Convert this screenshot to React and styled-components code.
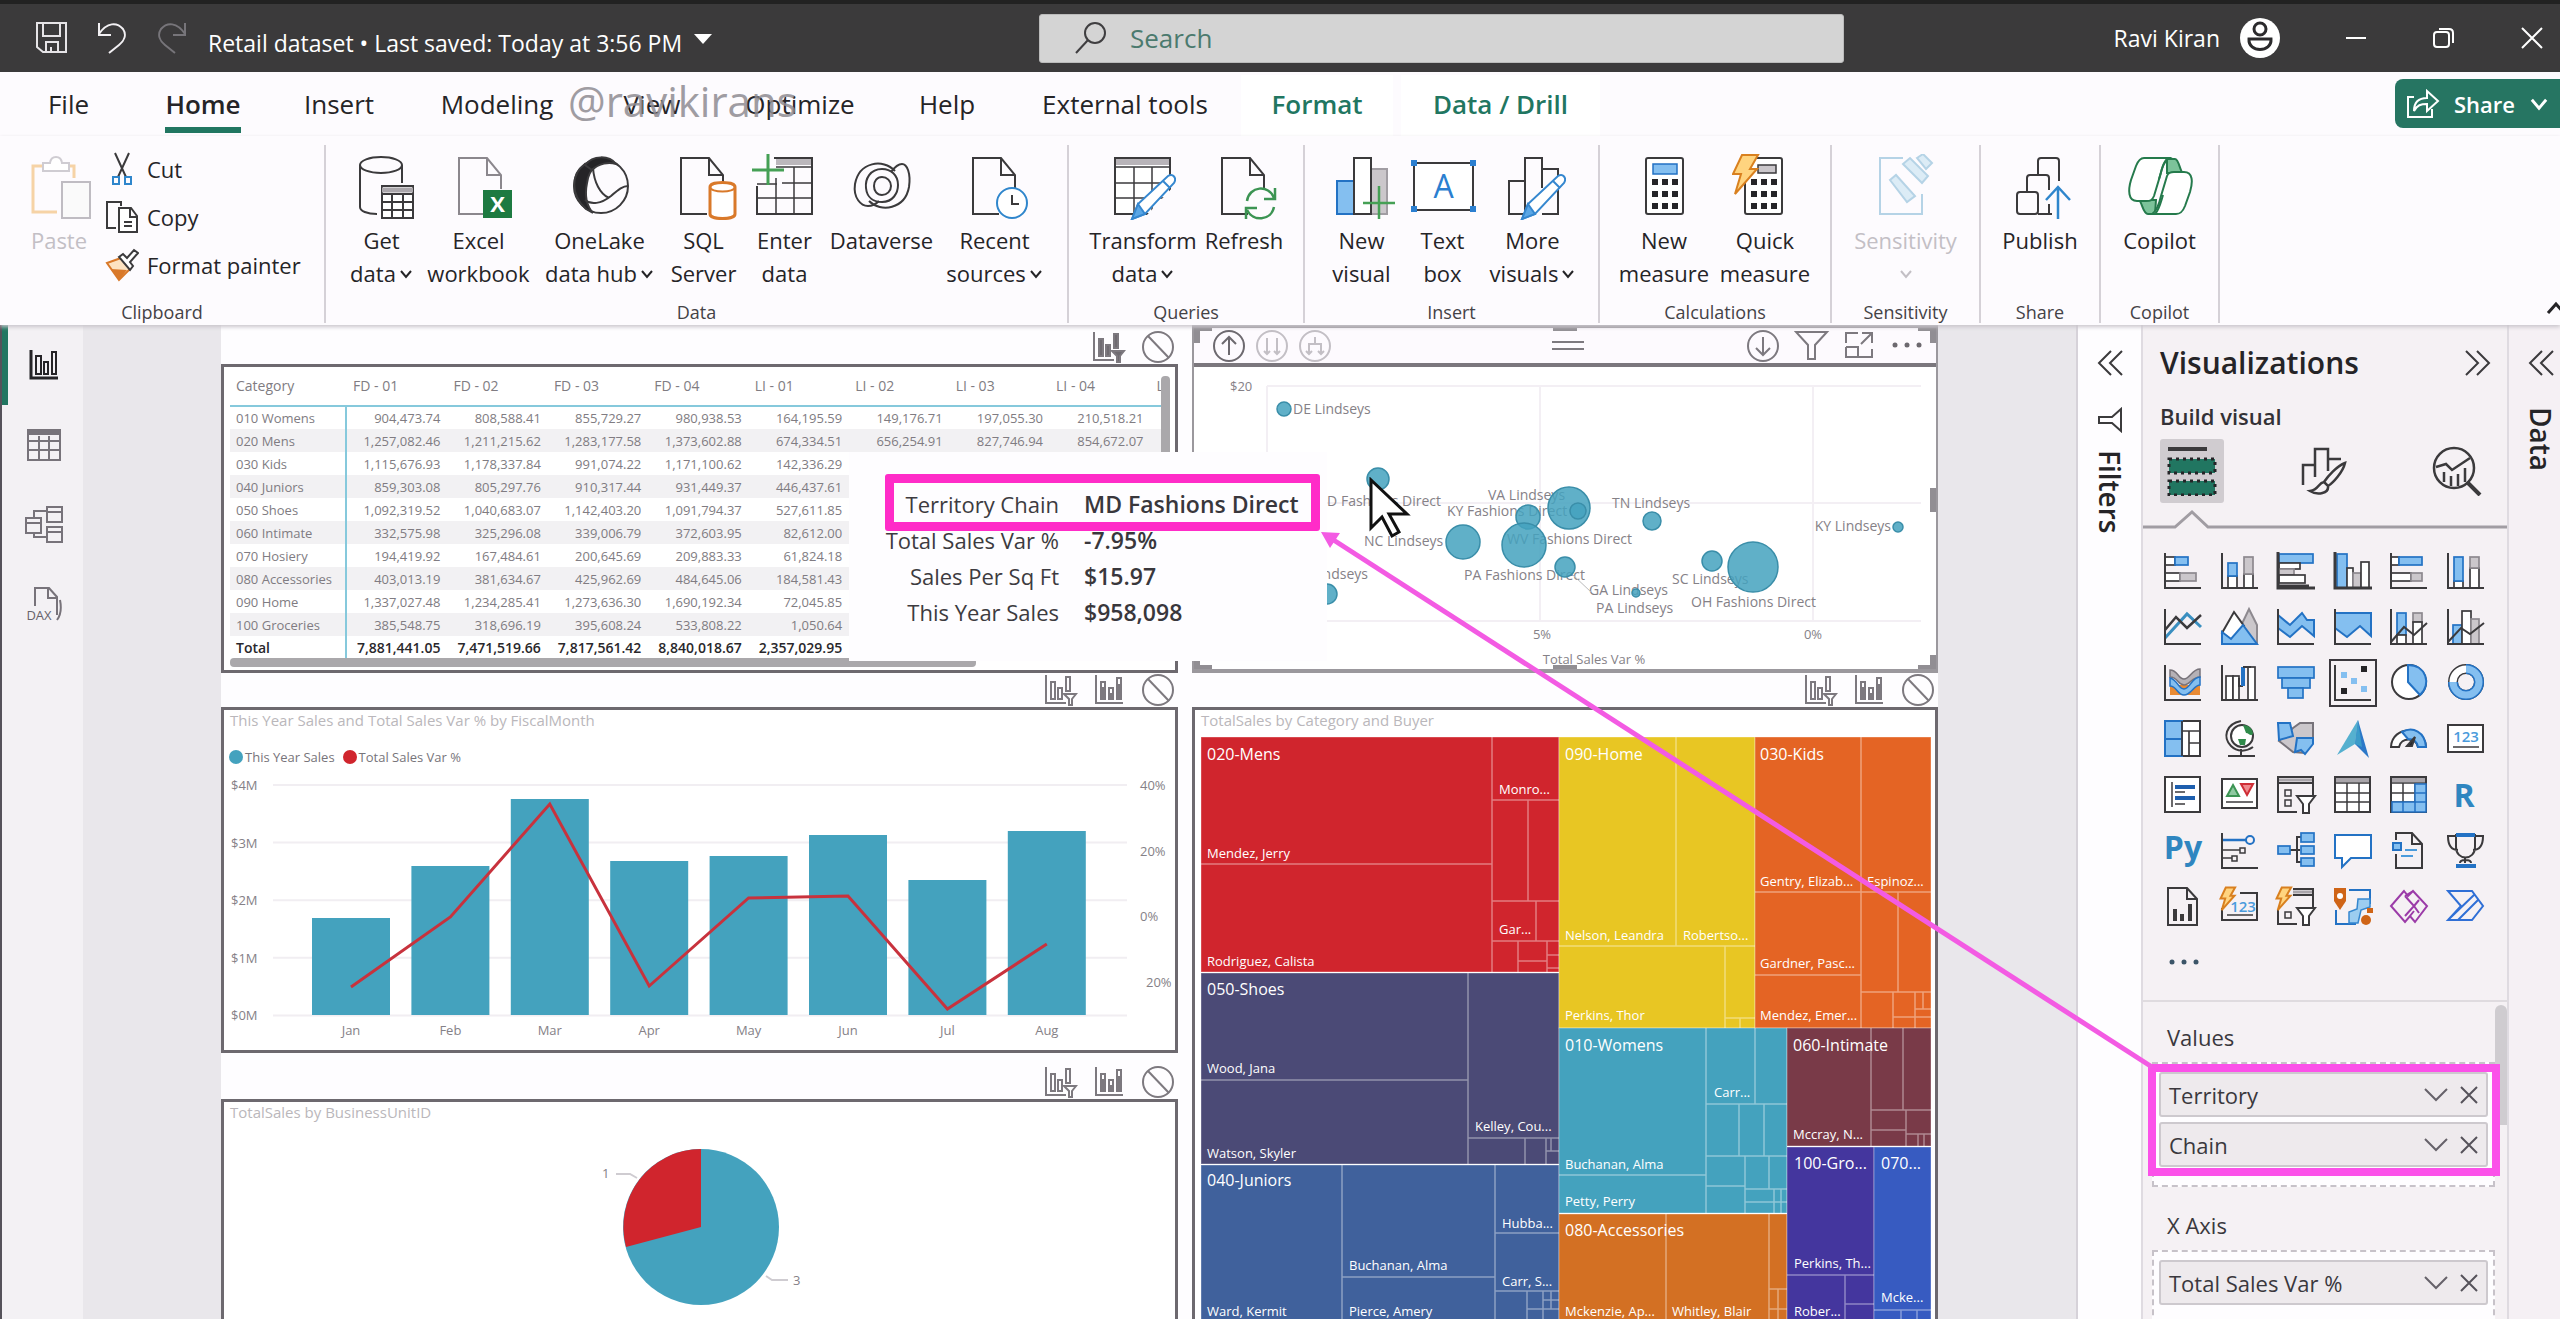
import React from 'react';
import styled, { createGlobalStyle, css } from 'styled-components';

const C = {
  ink: '#3b3a3c',
  dark: '#252427',
  green: '#217661',
  blue: '#84bff0',
  blueLine: '#2372c4',
  gray: '#cbc7cb',
  teal: '#44a2be',
  red: '#d0252d',
  pink: '#fb51e9',
};

const Global = createGlobalStyle`
  * { box-sizing: border-box; }
  html, body { margin: 0; padding: 0; }
  body { font-family: "Open Sans", "Noto Sans", sans-serif; color: ${C.dark}; overflow: hidden; }
  button { font: inherit; color: inherit; background: none; border: 0; padding: 0; margin: 0; }
  svg { display: block; flex: none; }
  h2, h3, h4, p, dl, dd, dt { margin: 0; font-weight: inherit; font-size: inherit; }
`;

const Shell = styled.div`
  position: relative; display: flex; flex-direction: column; height: 100vh; overflow: hidden; background: #fdfbfe;
`;

/* ---------- title bar ---------- */
const TitleBar = styled.header`
  display: grid; grid-template-columns: 1039fr 805fr 716fr; align-items: center; flex: none;
  height: 72px; background: #3b3a3b; color: #fff; border-top: 4px solid #222; font-size: 23px;
`;
const TitleLeft = styled.div`display: flex; align-items: center; padding-left: 32px; gap: 20px;`;
const IconButton = styled.button`display: flex; align-items: center; justify-content: center; flex: none; width: 40px; height: 40px;`;
const FileName = styled.button`display: flex; align-items: center; gap: 12px; padding-top: 10px; margin-left: -4px; white-space: nowrap; svg { margin-bottom: 8px; }`;
const SearchBox = styled.label`
  display: flex; align-items: center; gap: 20px; height: 49px; padding-left: 34px; background: #d4d4d4; border: 1px solid #bbb; border-radius: 3px;
`;
const SearchInput = styled.input`
  flex: 1; border: 0; outline: 0; background: transparent; font: 26px "Open Sans", "Noto Sans", sans-serif; color: #3f6e63;
  &::placeholder { color: #4b7a6e; opacity: 1; }
`;
const TitleRight = styled.div`display: flex; align-items: center; justify-content: flex-end; padding-right: 8px;`;
const User = styled.button`display: flex; align-items: center; gap: 19px; margin-right: 55px;`;
const WindowButtons = styled.div`display: flex; gap: 48px;`;

/* ---------- ribbon ---------- */
const Tabs = styled.nav`position: relative; display: flex; align-items: stretch; height: 64px; padding-top: 3px; flex: none;`;
const Tab = styled.button`
  width: ${p => p.$w}px; font-size: 26px; padding-bottom: 4px; white-space: nowrap;
  ${p => p.$active && css`font-weight: 600;`}
  ${p => p.$context && css`color: ${C.green}; font-weight: 600; background: #fff; margin-left: ${p.$gap}px;`}
  span { display: inline-block; padding: 8px 0 2px; border-bottom: 6px solid ${p => (p.$active ? C.green : 'transparent')}; line-height: 42px; }
`;
const Watermark = styled.div`position: absolute; left: 568px; top: 2px; font-size: 42px; line-height: 54px; color: #8f8c92; opacity: .85; pointer-events: none;`;
const ShareButton = styled.button`
  display: flex; align-items: center; justify-content: center; gap: 14px; width: 165px; height: 49px; margin: 4px 0 0 auto; border-radius: 8px 0 0 8px;
  background: #267562; color: #fff; font-size: 22px; font-weight: 600;
`;
const Ribbon = styled.section`display: flex; flex: none; height: 189px; padding: 9px 0 2px; position: relative; box-shadow: 0 2px 4px #c9c5cb; z-index: 1; background: #fdfbfe;`;
const Group = styled.div`width: ${p => p.$w}px; display: flex; flex-direction: column; justify-content: space-between; border-right: 2px solid #d5d1d7;`;
const GroupBody = styled.div`display: flex; justify-content: center;`;
const GroupLabel = styled.div`font-size: 18px; line-height: 22px; text-align: center; color: #444246;`;
const Command = styled.button`
  display: flex; flex-direction: column; align-items: center; width: ${p => p.$w}px; padding-top: 9px; font-size: 22px; line-height: 33px; white-space: nowrap;
  color: ${p => (p.disabled ? '#c3bfc5' : C.dark)};
  svg.icon { margin-bottom: 4px; }
  span { display: flex; align-items: center; gap: 3px; min-height: 33px; }
`;
const ClipRow = styled.div`display: flex; padding: 0 14px 0 24px; gap: 11px;`;
const ClipList = styled.div`display: flex; flex-direction: column;`;
const ClipButton = styled.button`display: flex; align-items: center; gap: 8px; height: 48px; font-size: 22px; white-space: nowrap;`;
const Collapse = styled.button`margin: auto 0 8px auto; width: 14px; overflow: hidden;`;

/* ---------- workspace ---------- */
const Workspace = styled.main`display: flex; flex: 1; min-height: 0;`;
const Rail = styled.nav`width: 83px; flex: none; background: #f3f1f4; border-left: 2px solid #55525a; display: flex; flex-direction: column;`;
const RailButton = styled.button`
  height: 80px; display: flex; align-items: center; justify-content: center; padding-right: 4px; border-left: 6px solid ${p => (p.$active ? C.green : 'transparent')};
`;
const Canvas = styled.div`flex: 1; min-width: 0; background: #e9e7eb; padding: 0 138px; overflow: hidden; border-right: 2px solid #d6d2d9;`;
const Page = styled.div`position: relative; display: grid; grid-template-columns: 957fr 746fr; gap: 14px; height: 100%; background: #fefdff; overflow: hidden;`;
const Column = styled.div`display: flex; flex-direction: column; min-width: 0;`;
const VisualActions = styled.div`display: flex; justify-content: flex-end; align-items: flex-end; gap: 16px; flex: none; height: ${p => p.$h}px; padding: 0 3px 1px;`;
const Card = styled.section`position: relative; flex: none; border: 3px solid #6d696f; background: #fff; height: ${p => p.$h}px; overflow: hidden;`;
const CardTitle = styled.h3`font-size: 15px; line-height: 20px; color: #bab7bb; padding: 0 6px; white-space: nowrap;`;
const Plot = styled.svg`width: 100%; height: auto;`;
const TreeFrame = styled.div`padding-top: 4px;`;

const TableFrame = styled.div`height: 288px; margin: 3px 14px 0 6px; overflow: hidden;`;
const Matrix = styled.table`
  border-collapse: collapse; table-layout: fixed; width: 1020px; font-size: 13px; color: #807c82;
  th, td { padding: 0 6px; height: 23px; line-height: 22px; text-align: right; font-weight: 400; white-space: nowrap; }
  th:first-child { width: 116px; text-align: left; border-right: 2px solid #86c9dc; }
  thead th { height: 36px; text-align: left; padding: 0 7px 4px; border-bottom: 2px solid #86c9dc; font-size: 14px; }
  thead th:first-child { border-right: 0; padding: 0 6px 4px; }
  tbody tr:nth-child(even) { background: #f2f1f3; }
  tfoot th, tfoot td { font-weight: 600; font-size: 14px; color: #29272b; padding-left: 0; }
  tfoot th { padding-left: 6px; }
`;
const VScroll = styled.div`position: absolute; right: 5px; top: 9px; width: 9px; height: 270px; border-radius: 4px; background: #aaa8ab;`;
const HScroll = styled.div`width: 746px; height: 9px; margin-left: 6px; border-radius: 4px; background: #aaa8ab;`;

const Legend = styled.ul`
  display: flex; gap: 8px; list-style: none; margin: 17px 0 0; padding: 0 5px; font-size: 13px; line-height: 20px; color: #77747a; height: 29px;
  li { display: flex; gap: 2px; align-items: center; height: 20px; white-space: nowrap; }
`;
const Dot = styled.i`width: 14px; height: 14px; border-radius: 50%; background: ${p => p.$c};`;

const SelectedVisual = styled.section`position: relative; flex: none; height: 348px; border: 2px solid #9b989d; border-bottom-width: 4px; border-top-width: 3px; background: #fff; overflow: hidden;`;
const VisualHeader = styled.div`display: flex; align-items: center; height: 39px; padding: 0 12px 0 18px; background: #fdfafe; border-bottom: 4px solid #7b777d;`;
const HeaderSide = styled.div`display: flex; align-items: center; flex: 1; gap: ${p => p.$gap}px; justify-content: ${p => (p.$end ? 'flex-end' : 'flex-start')};`;
const Handle = styled.i`position: absolute; background: #918e93; ${p => p.$s}`;

const Tooltip = styled.div`
  position: absolute; left: 628px; top: 127px; width: 478px; height: 209px; background: #fefdff;
`;
const TipList = styled.dl`
  display: grid; grid-template-columns: 210px auto; column-gap: 25px; padding-top: 34px; font-size: 22px; line-height: 36px; white-space: nowrap;
  dt { justify-self: end; color: #3d3b40; }
  dd { color: #39373c; font-weight: 600; font-size: 23px; }
`;
const TipMark = styled.div`position: absolute; left: 36px; top: 22px; width: 435px; height: 57px; border: 9px solid #ff2cc8; border-radius: 3px;`;
const Pointer = styled.svg`position: absolute; left: 1147px; top: 152px;`;

/* ---------- side panes ---------- */
const FiltersPane = styled.aside`width: 65px; flex: none; background: #fefdff; border-right: 2px solid #dfdbe1; display: flex; flex-direction: column; align-items: center; padding: 18px 0 0; gap: 24px;`;
const DataPane = styled.aside`width: 53px; flex: none; background: #f5f0f4; border-left: 2px solid #dfdbe1; display: flex; flex-direction: column; align-items: center; padding: 18px 0 0 12px; gap: 24px;`;
const VerticalLabel = styled.h2`display: flex; align-items: center; gap: 17px; writing-mode: vertical-rl; font-size: 28px; line-height: 34px; font-weight: 600;`;
const VizPane = styled.aside`width: 364px; flex: none; background: #f5f1f4; position: relative;`;
const PaneHead = styled.div`display: flex; justify-content: space-between; align-items: center; height: 40px; margin: 18px 16px 0 17px;`;
const PaneTitle = styled.h2`font-size: 30px; line-height: 40px; font-weight: 600;`;
const SubTitle = styled.h3`margin: 17px 17px 0; font-size: 22px; line-height: 32px; font-weight: 600; color: #333136;`;
const Modes = styled.div`display: flex; justify-content: space-between; margin: 7px 18px 0 17px;`;
const Mode = styled.button`width: 64px; height: 64px; display: flex; align-items: center; justify-content: center; border-radius: 3px; background: ${p => (p.$active ? '#d0ccd0' : 'none')};`;
const Gallery = styled.div`display: grid; grid-template-columns: repeat(6, 1fr); grid-auto-rows: 56px; margin: 14px 13px 0 12px;`;
const VizButton = styled.button`
  display: flex; align-items: center; justify-content: center; width: 48px; height: 48px; place-self: center;
  border: ${p => (p.$selected ? '2px solid #3b383d' : '0')};
`;
const More = styled.button`display: block; margin: 9px 0 0 25px;`;
const Wells = styled.div`position: relative; margin-top: 20px; border-top: 2px solid #dfdbdf; padding: 18px 12px 0 9px;`;
const WellName = styled.h4`font-size: 22px; line-height: 34px; padding-left: 15px; color: #3a383d;`;
const Well = styled.div`position: relative; display: flex; flex-direction: column; gap: 5px; margin: 8px 0 21px; padding: 8px 5px 18px; border: 2px dashed #c7c2c9; background: #fefdff;`;
const Field = styled.div`display: flex; align-items: center; gap: 12px; height: 45px; padding: 0 8px; border: 2px solid #cdc9ce; border-radius: 3px; background: #eeeaed; font-size: 22px; color: #3a383d; span { flex: 1; }`;
const WellScroll = styled.div`position: absolute; right: 0; top: 3px; width: 12px; height: 120px; border-radius: 6px 6px 0 0; background: #cfccd0;`;
const WellMark = styled.div`position: absolute; left: -6px; top: 0; width: 352px; height: 112px; border: 8px solid ${C.pink};`;
const Arrow = styled.svg`position: absolute; left: 0; top: 0; pointer-events: none; z-index: 3;`;

/* ---------- small drawings ---------- */
const Svg = ({ w, h = w, vb, children, ...r }) => (
  <svg width={w} height={h} viewBox={vb || `0 0 ${w} ${h}`} fill="none" stroke={C.ink} strokeWidth="2" aria-hidden="true" {...r}>{children}</svg>
);
const Chevron = ({ w = 14, color = C.dark }) => <Svg w={w} h={w} vb="0 0 14 14" stroke={color}><path d="M2 4l5 6 5-6" /></Svg>;
const ChevronButton = styled.button`display: flex; align-items: center; height: 40px;`;
const DoubleChevron = ({ right }) => (
  <Svg w={26} h={26}>{right
    ? <path d="M1 1l12 12L1 25M12 1l12 12-12 12" />
    : <path d="M25 1L13 13l12 12M14 1L2 13l12 12" />}</Svg>
);
const Big = ({ children, ...r }) => <Svg w={66} h={66} className="icon" {...r}>{children}</Svg>;
const PageShape = ({ x = 11, c = C.ink }) => <><path d={`M${x + 26} 60H${x}V4h28l14 17v14`} fill="none" stroke={c} /><path d={`M${x + 28} 4v17h14`} stroke={c} /></>;
const Pencil = () => <><path d="M22 65l6-15 30-28c5-3 9 2 6 7L35 60z" fill="#fff" stroke="#3587cf" /><path d="M22 65l6-15 7 10z" fill="#5ba7e6" stroke="#3587cf" /><path d="M53 27l7 7" stroke="#3587cf" /></>;
const Keys = ({ x }) => [0, 1, 2].flatMap(r => [0, 1, 2].map(c => <rect key={`${r}${c}`} x={x + c * 10} y={25 + r * 12} width="6" height="6" fill={C.dark} stroke="none" />));
const Bolt = ({ s = 1, x = 0, y = 0 }) => <path transform={`translate(${x} ${y}) scale(${s})`} d="M10 1h16l-8 14h7L3 40l6-20H1z" fill="#ffd47f" stroke="#d9801f" strokeWidth={2 / s} />;

const BIG = {
  paste: <Big><path d="M40 12h8v12M18 12H7v46h24" stroke="#f6d3a6" strokeWidth="3" /><path d="M17 17v-8h7c1-8 11-8 12 0h7v8z" stroke="#cfccd2" fill="#fff" /><rect x="36" y="28" width="28" height="36" fill="#fafafa" stroke="#bfbcc2" /></Big>,
  get: <Big><ellipse cx="32" cy="11" rx="21" ry="8" /><path d="M11 11v42c0 4 7 7 17 7M53 11v18" /><rect x="33" y="32" width="31" height="32" fill="#fff" /><path d="M33 36h31" strokeWidth="5" stroke="#aaa6ab" /><path d="M33 40h31M33 48h31M33 56h31M43 40v24M54 40v24" /></Big>,
  excel: <Big><PageShape x={13} c="#8b878d" /><rect x="37" y="36" width="29" height="28" fill="#1d7a41" stroke="none" /><text x="51.500" y="58" textAnchor="middle" fontSize="22" fontWeight="700" fill="#fff" stroke="none">X</text></Big>,
  lake: <Big><circle cx="34" cy="32" r="27" /><path d="M18 10C4 20 3 40 19 55l7 4c-8-9-8-20-6-30 1-7 3-12 7-15z" fill={C.dark} /><path d="M18 11C26 1 42 1 49 10c-7-2-17-1-24 6z" fill={C.dark} /><path d="M26 14c1 14 7 26 16 30M18 46c6 5 16 4 26-4 8-7 12-10 17-10" /></Big>,
  sql: <Big><PageShape x={10} /><path d="M39 33c0-6 25-6 25 0v27c0 6-25 6-25 0z" fill="#fff" stroke="#d9792a" strokeWidth="3" /><path d="M39 33c0 6 25 6 25 0" stroke="#d9792a" /></Big>,
  enter: <Big><path d="M22 4h38v56H5V32" /><path d="M24 8h35" stroke="#bbb7bc" strokeWidth="6" /><path d="M24 13h36M30 29h30M5 44h55M24 24v36M42 13v47M5 30h20" strokeWidth="1.500" /><path d="M16 0v31M0 16h32" stroke="#45a055" strokeWidth="3" /></Big>,
  dataverse: <Big><path d="M46 17C34 4 10 8 6 30c-2 14 6 22 13 22 5 0 8-2 11-5" /><path d="M20 47c12 12 36 8 40-14 2-14-2-23-7-23-4 0-8 4-11 8" /><path d="M33 15c-12 0-17 10-16 19 1 10 8 14 16 14 11 0 16-9 16-17 0-10-7-16-16-16z" /><path d="M33 23c-5 0-8 4-8 9s3 9 8 9 9-4 9-9-4-9-9-9z" /></Big>,
  recent: <Big><PageShape /><circle cx="50" cy="49" r="15" fill="#fff" stroke="#2f86cc" /><path d="M50 41v9h7" /></Big>,
  transform: <Big><path d="M5 4h55v56H5z" fill="#fff" /><path d="M6 8h53" stroke="#b8b4b9" strokeWidth="6" /><path d="M5 13h55M5 29h55M5 44h55M24 13v47M42 13v47" strokeWidth="1.500" /><path d="M36 62h28V32z" fill="#fdfbfe" stroke="none" /><Pencil /></Big>,
  refresh: <Big><PageShape /><path d="M36 47c2-15 22-17 27-3M64 34v11H53M63 53c-3 14-21 15-27 3M35 65V54h11" stroke="#3c9453" strokeWidth="2.500" /></Big>,
  newVisual: <Big><rect x="8" y="27" width="17" height="33" fill={C.blue} stroke={C.blueLine} /><rect x="42" y="15" width="16" height="45" fill={C.gray} stroke="#a19da3" /><rect x="25" y="4" width="17" height="56" fill="#fff" /><path d="M50 32v33M34 49h32" stroke="#45a055" strokeWidth="2.500" /></Big>,
  textBox: <Big><rect x="4" y="9" width="59" height="47" fill="#fff" /><text x="33.500" y="44" textAnchor="middle" fontSize="32" fill="#2b7fd0" stroke="none">A</text>{[[1, 6], [60, 6], [1, 52], [60, 52]].map(([x, y]) => <rect key={`${x}${y}`} x={x} y={y} width="6" height="6" fill="#2b7fd0" stroke="none" />)}</Big>,
  moreVisuals: <Big><path d="M25 27H9v33h16M25 60V4h17v30M42 15h16v45H42" /><Pencil /></Big>,
  calc: <Big><rect x="15" y="4" width="37" height="56" rx="2" fill="#fff" /><rect x="22" y="10" width="24" height="10" fill={C.blue} stroke={C.blueLine} strokeWidth="1.500" /><Keys x={21} /></Big>,
  quick: <Big><rect x="13" y="4" width="37" height="56" rx="2" fill="#fff" /><rect x="26" y="11" width="18" height="8" fill={C.gray} strokeWidth="1.500" /><Keys x={19} /><Bolt /></Big>,
  sensitivity: <Big stroke="#b5d3e6"><path d="M30 4H7v56h42V40" /><path d="M17 26l6-5 19 21-8 6zM30 10l7-6 18 18-6 7zM44 4l6-4 9 9-6 6z" fill="#dcecf6" /></Big>,
  publish: <Big><rect x="10" y="38" width="21" height="22" rx="3" /><path d="M20 37V24q0-3 3-3h16q3 0 3 3v12M31 20V7q0-3 3-3h15q3 0 3 3v20M31 60h14M42 50v10" /><path d="M51 65V34M39 46l12-13 12 13" stroke="#2f86cc" strokeWidth="2.500" /></Big>,
  copilot: <Big stroke="#257a4c"><path d="M40 5l8 0c4 0 5 13 8 14H40zM28 60h-7c-5 0-6-12-9-14h17z" fill="#7cc39a" /><path d="M17 4h25c-5 3-7 9-9 18l-6 20c-2 5-4 5-8 5h-9C1 47 1 36 4 26l5-14c2-5 4-8 8-8z" fill="#fff" /><path d="M49 60H25c5-3 7-9 9-18l6-20c1-3 3-4 7-4h10c9 0 9 10 6 20l-5 14c-2 5-4 8-9 8z" fill="#fff" /><path d="M40 5c-5 5-4 8-8 20M28 60c4-4 5-9 8-19" /></Big>,
};

const commandGroups = [
  { name: 'Data', w: 743, items: [['get', 72, 'Get', 'data', 1], ['excel', 122, 'Excel', 'workbook'], ['lake', 120, 'OneLake', 'data hub', 1], ['sql', 88, 'SQL', 'Server'], ['enter', 74, 'Enter', 'data'], ['dataverse', 120, 'Dataverse'], ['recent', 106, 'Recent', 'sources', 1]] },
  { name: 'Queries', w: 236, items: [['transform', 116, 'Transform', 'data', 1], ['refresh', 86, 'Refresh']] },
  { name: 'Insert', w: 295, items: [['newVisual', 80, 'New', 'visual'], ['textBox', 82, 'Text', 'box'], ['moreVisuals', 98, 'More', 'visuals', 1]] },
  { name: 'Calculations', w: 232, items: [['calc', 100, 'New', 'measure'], ['quick', 102, 'Quick', 'measure']] },
  { name: 'Sensitivity', w: 149, items: [['sensitivity', 120, 'Sensitivity', '', 1, true]] },
  { name: 'Share', w: 120, items: [['publish', 90, 'Publish']] },
  { name: 'Copilot', w: 119, items: [['copilot', 90, 'Copilot']] },
];

const tabs = [['File', 137], ['Home', 132, 'active'], ['Insert', 140], ['Modeling', 176], ['View', 134], ['Optimize', 162], ['Help', 132], ['External tools', 224], ['Format', 152, 'context', 4], ['Data / Drill', 199, 'context', 8]];

/* ---------- gallery drawings, 38 x 38 ---------- */
const Axis = () => <path d="M1 1v35h36" />;
const R = ({ b, g, ...p }) => <rect fill={b ? C.blue : g ? C.gray : '#fff'} stroke={b ? C.blueLine : g ? '#8d898f' : C.ink} strokeWidth="1.700" {...p} />;
const bx = (kind, x, y, width, height) => <R key={`${x}-${y}`} b={kind === 'b'} g={kind === 'g'} x={x} y={y} width={width} height={height} />;
const SlicerShape = () => <><path d="M20 36H1V1h35v18M1 7h35" /><path d="M2 4h33" stroke="#a9a5aa" strokeWidth="3" /><rect x="8" y="14" width="6" height="6" strokeWidth="1.500" /><rect x="8" y="24" width="6" height="6" strokeWidth="1.500" /><path d="M20 20h18l-6 8v9h-6v-9z" fill="#fff" /></>;
const GridShape = () => <><rect x="1" y="1" width="35" height="35" fill="#fff" /><path d="M2 4h33" stroke="#a9a5aa" strokeWidth="4" /><path d="M1 7h35M1 17h35M1 26h35M13 7v29M25 7v29" strokeWidth="1.500" /></>;

const gallery = [
  ['Stacked bar chart', <>{bx('w', 1, 5, 10, 8)}{bx('b', 11, 5, 13, 8)}{bx('w', 1, 21, 15, 8)}{bx('g', 16, 21, 16, 8)}<Axis /></>],
  ['Stacked column chart', <>{bx('w', 7, 24, 9, 12)}{bx('b', 7, 11, 9, 13)}{bx('w', 23, 22, 9, 14)}{bx('g', 23, 5, 9, 17)}<Axis /></>],
  ['Clustered bar chart', <>{bx('b', 2, 2, 34, 9)}{bx('w', 2, 11, 21, 6)}{bx('g', 2, 17, 15, 6)}{bx('w', 2, 23, 26, 8)}<path d="M1 0v36h37M2 34h30" strokeWidth="3" /></>],
  ['Clustered column chart', <>{bx('b', 3, 2, 10, 34)}{bx('w', 13, 16, 6, 20)}{bx('g', 19, 21, 8, 15)}{bx('w', 27, 10, 8, 26)}<path d="M1 0v36h37" strokeWidth="3" /></>],
  ['100% stacked bar chart', <>{bx('w', 1, 5, 8, 8)}{bx('b', 9, 5, 23, 8)}{bx('w', 1, 21, 20, 8)}{bx('g', 21, 21, 11, 8)}<Axis /></>],
  ['100% stacked column chart', <>{bx('w', 7, 29, 9, 7)}{bx('b', 7, 5, 9, 24)}{bx('w', 23, 16, 9, 20)}{bx('g', 23, 5, 9, 11)}<Axis /></>],
  ['Line chart', <><path d="M1 30L23 6l14 13" stroke="#3a8fc0" strokeWidth="3" /><path d="M1 22L12 9l11 11L37 7" strokeWidth="2.500" /><Axis /></>],
  ['Area chart', <><path d="M18 22L28 1l8 16v19" fill={C.gray} stroke="#8d898f" /><path d="M1 25L13 4l10 14-12 14z" fill="#fff" /><path d="M1 24l9 7 12-14 14 19H1z" fill={C.blue} stroke={C.blueLine} /></>],
  ['Stacked area chart', <><path d="M1 7l12 10L25 5l5 7h7v16L25 18 13 29 1 20z" fill={C.blue} stroke={C.blueLine} /><Axis /></>],
  ['100% stacked area chart', <><path d="M1 5h36v23L26 18 13 29 1 20z" fill={C.blue} stroke={C.blueLine} /><Axis /></>],
  ['Line and stacked column chart', <>{bx('b', 7, 5, 9, 22)}{bx('w', 7, 27, 9, 9)}{bx('g', 23, 5, 9, 9)}{bx('w', 23, 14, 9, 22)}<path d="M1 34l13-15 10 8 13-12" /><Axis /></>],
  ['Line and clustered column chart', <>{bx('b', 6, 17, 9, 19)}{bx('w', 15, 3, 9, 33)}{bx('g', 24, 11, 8, 25)}<path d="M1 34l13-14 9 6 14-11" /><Axis /></>],
  ['Ribbon chart', <><rect x="6" y="21" width="30" height="10" fill="#e98a33" stroke="none" /><path d="M6 6c8 0 8 9 14 9S28 5 36 5v8c-8 0-10 8-16 8S14 13 6 13z" fill="#b5b1b6" stroke="#77737a" strokeWidth="1.500" /><path d="M6 14c8 2 8 11 14 11s8-12 16-12v8c-6 0-9 10-16 10S13 22 6 22z" fill={C.blue} stroke={C.blueLine} strokeWidth="1.500" /><Axis /></>],
  ['Waterfall chart', <>{bx('w', 5, 12, 7, 24)}{bx('w', 12, 12, 6, 24)}<path d="M18 14v8h4" />{bx('w', 27, 3, 7, 33)}<rect x="20" y="3" width="4" height="19" fill={C.blueLine} stroke="none" /><path d="M22 3h8" /><Axis /></>],
  ['Funnel', <>{bx('b', 1, 3, 36, 11)}{bx('b', 5, 14, 28, 10)}{bx('b', 11, 24, 15, 10)}</>],
  ['Scatter chart', <><Axis />{[[7, 8, 0], [17, 14, 0], [27, 22, 0], [27, 2, 1], [7, 24, 1]].map(([x, y, d]) => <rect key={`${x}${y}`} x={x} y={y} width="6" height="6" fill={d ? C.dark : C.blue} stroke="none" />)}</>, true],
  ['Pie chart', <><circle cx="19" cy="18" r="17" fill="#fff" /><path d="M18 1v17l12 13C42 20 36 1 18 1z" fill={C.blue} stroke={C.blueLine} /></>],
  ['Donut chart', <><circle cx="19" cy="18" r="13" stroke={C.ink} strokeWidth="10" /><circle cx="19" cy="18" r="13" stroke="#fff" strokeWidth="7" /><path d="M19 5a13 13 0 1 1-13 13" stroke={C.blueLine} strokeWidth="10" /><path d="M19 5a13 13 0 1 1-13 13" stroke={C.blue} strokeWidth="7" /></>],
  ['Treemap', <><rect x="1" y="1" width="35" height="35" fill="#fff" /><rect x="1" y="1" width="17" height="35" fill={C.blue} stroke={C.blueLine} /><path d="M1 19h17" stroke={C.blueLine} /><path d="M18 11h18M25 11v25M25 23h11M18 1v35" strokeWidth="1.700" /></>],
  ['Map', <><circle cx="21" cy="16" r="11" fill="#fff" /><path d="M22 5c6 0 10 4 10 9-3 3-4-1-7-1zM17 19h8l-1 6h-5z" fill="#2f8a4a" stroke="none" /><path d="M20 1C4 4 2 18 10 26c6 6 15 6 22 1M20 29v6M7 36h27" /></>],
  ['Filled map', <><path d="M16 8l7-5h13v18l-8 12-12-1L2 21z" fill={C.gray} stroke="#77737a" /><path d="M1 3h12l3 13-14 4z" fill={C.blue} stroke={C.blueLine} /><path d="M20 18h16v6l-8 10-4-4-6 2z" fill={C.blue} stroke={C.blueLine} /></>],
  ['Azure map', <><path d="M24 0L3 35l18-11z" fill="#55b0cf" stroke="none" /><path d="M24 0l11 38-14-14z" fill="#2c78c8" stroke="none" /><path d="M24 0l-3 24 7 3z" fill="#3b9bc9" stroke="none" /></>],
  ['Gauge', <><path d="M1 27C2 5 35 5 36 27h-8c-2-10-17-10-19 0z" fill="#fff" /><path d="M12 12c11-6 23 0 24 15h-8c-1-6-5-8-10-8z" fill={C.blue} stroke={C.blueLine} /><path d="M17 26l8-9-3 9z" fill={C.dark} /></>],
  ['Card', <><rect x="1" y="5" width="35" height="27" fill="#fff" /><text x="19" y="22" textAnchor="middle" fontSize="15" fontWeight="600" fill="#4a9bdc" stroke="none">123</text><path d="M6 27h26" strokeWidth="1.500" /></>],
  ['Multi-row card', <><rect x="1" y="1" width="35" height="35" fill="#fff" /><path d="M8 6v25M11 16h10M11 28h10" strokeWidth="1.500" /><path d="M11 11h20M11 22h20" stroke="#1e5fae" strokeWidth="4" /></>],
  ['KPI', <><rect x="1" y="3" width="35" height="29" fill="#fff" /><path d="M12 9l6 11H6z" fill="#8fc9a1" stroke="#3c9453" /><path d="M26 19l6-11H20z" fill="#ee8a8d" stroke="#cf2e36" /><path d="M5 26h27" strokeWidth="1.500" /></>],
  ['Slicer', <SlicerShape />],
  ['Table', <GridShape />],
  ['Matrix', <><GridShape /><path d="M25 8h11v28H2V26h23z" fill={C.blue} stroke={C.blueLine} strokeWidth="1.500" /><path d="M13 26v10M25 26v10M25 17h11M25 26h11" stroke={C.blueLine} strokeWidth="1.500" /></>],
  ['R script visual', <text x="17" y="31" textAnchor="middle" fontSize="32" fontWeight="700" fill="#2f86c0" stroke="none">R</text>],
  ['Python visual', <text x="19" y="27" textAnchor="middle" fontSize="32" fontWeight="700" fill="#2f86c0" stroke="none">Py</text>],
  ['Key influencers', <><path d="M1 8h24" stroke={C.blueLine} strokeWidth="2.500" /><circle cx="29" cy="8" r="4" stroke={C.blueLine} /><path d="M1 18h18M1 26h10" strokeWidth="1.500" /><rect x="19" y="16" width="5" height="5" strokeWidth="1.500" /><rect x="11" y="24" width="5" height="5" strokeWidth="1.500" /><Axis /></>],
  ['Decomposition tree', <><path d="M13 18h10M25 5h-5v25h5" />{bx('b', 1, 14, 12, 8)}{bx('b', 24, 1, 13, 9)}{bx('b', 24, 14, 13, 8)}{bx('b', 24, 26, 13, 8)}</>],
  ['Q&A', <path d="M1 3h36v23H17l-9 9v-9H1z" fill="#fff" stroke={C.blueLine} />],
  ['Smart narrative', <><path d="M6 8V1h16l10 11v24H6V22M22 1v11h10" /><rect x="3" y="11" width="8" height="7" fill={C.blue} stroke={C.blueLine} /><path d="M15 18h12M11 24h12" stroke="#4a9bdc" /></>],
  ['Goals', <><path d="M9 4H1c0 10 4 14 10 14M28 4h8c0 10-4 14-10 14M9 3h19v12c0 14-19 14-19 0z" fill="none" /><path d="M18 25v6M13 31c0-4 11-4 11 0" /><path d="M9 3h19M9 34h20" stroke={C.blueLine} strokeWidth="4" /></>],
  ['Paginated report', <><path d="M4 0h19l10 11v26H4zM23 0v11h10" /><path d="M11 21v12M18 26v7M26 16v17" strokeWidth="4" /></>],
  ['Card (new)', <><path d="M19 5h17v27H1V20" /><text x="22" y="24" textAnchor="middle" fontSize="15" fontWeight="600" fill="#4a9bdc" stroke="none">123</text><path d="M6 27h26" strokeWidth="1.500" /><Bolt s={.58} x={-1} y={-1} /></>],
  ['Slicer (new)', <><SlicerShape /><path d="M0 0h16v22H0z" fill="#f5f1f4" stroke="none" /><Bolt s={.58} x={-1} y={-1} /></>],
  ['ArcGIS Maps', <><path d="M15 2h21v14M2 22v14h20" stroke={C.blueLine} /><path d="M15 35V24l8-3 1-10h12v8l-9 3-3 13z" fill="#9ccdf0" stroke="#3587cf" strokeWidth="1.500" /><path d="M0 0h12v13l-6 9-6-9z" fill="#cf6416" stroke="none" /><circle cx="6" cy="8" r="3" fill="#fff" stroke="none" /><circle cx="32" cy="32" r="5" fill="#cf6416" stroke="none" /><rect x="33" y="20" width="6" height="5" fill="#cf6416" stroke="none" /></>],
  ['Power Apps', <path d="M14 3L1 18l14 16 5-6 5 6 12-16L23 3l-5 5zM15 8l9 10-9 10M24 18l5-6M24 18l5 7M15 8l8-5M20 28l4-5" stroke="#9b3ba8" />],
  ['Power Automate', <path d="M1 3h24l11 15-11 14H1l13-14zM1 32L28 6M11 32L32 11" stroke="#2f6fd6" />],
];

/* ---------- data ---------- */
const columns = ['FD - 01', 'FD - 02', 'FD - 03', 'FD - 04', 'LI - 01', 'LI - 02', 'LI - 03', 'LI - 04', 'LI - 05'];
const rows = [
  ['010 Womens', '904,473.74', '808,588.41', '855,729.27', '980,938.53', '164,195.59', '149,176.71', '197,055.30', '210,518.21'],
  ['020 Mens', '1,257,082.46', '1,211,215.62', '1,283,177.58', '1,373,602.88', '674,334.51', '656,254.91', '827,746.94', '854,672.07'],
  ['030 Kids', '1,115,676.93', '1,178,337.84', '991,074.22', '1,171,100.62', '142,336.29'],
  ['040 Juniors', '859,303.08', '805,297.76', '910,317.44', '931,449.37', '446,437.61'],
  ['050 Shoes', '1,092,319.52', '1,040,683.07', '1,142,403.20', '1,091,794.37', '527,611.85'],
  ['060 Intimate', '332,575.98', '325,296.08', '339,006.79', '372,603.95', '82,612.00'],
  ['070 Hosiery', '194,419.92', '167,484.61', '200,645.69', '209,883.33', '61,824.18'],
  ['080 Accessories', '403,013.19', '381,634.67', '425,962.69', '484,645.06', '184,581.43'],
  ['090 Home', '1,337,027.48', '1,234,285.41', '1,273,636.30', '1,690,192.34', '72,045.85'],
  ['100 Groceries', '385,548.75', '318,696.19', '395,608.24', '533,808.22', '1,050.64'],
];
const totals = ['7,881,441.05', '7,471,519.66', '7,817,561.42', '8,840,018.67', '2,357,029.95'];

const T = ({ x, y, s = 13, c = '#858187', a = 'start', w = 400, children }) => (
  <text x={x} y={y + Math.round(s * 0.36)} fontSize={s} fill={c} textAnchor={a} fontWeight={w} stroke="none">{children}</text>
);

const months = [['Jan', 918, 987], ['Feb', 866, 917], ['Mar', 799, 804], ['Apr', 861, 986], ['May', 856, 898], ['Jun', 835, 896], ['Jul', 880, 1009], ['Aug', 831, 944]];
const barX = i => 312 + i * 99.4;

function ComboChart() {
  return (
    <Plot viewBox="224 776 951 273" role="img" aria-label="This Year Sales and Total Sales Var % by month">
      {['$4M', '$3M', '$2M', '$1M', '$0M'].map((l, i) => (
        <g key={l}><path d={`M273 ${785 + i * 57.6}H1127`} stroke="#f1eef2" strokeWidth="2" /><T x={231} y={785 + i * 57.6}>{l}</T></g>
      ))}
      {['40%', '20%', '0%', '20%'].map((l, i) => <T key={i} x={i === 3 ? 1146 : 1140} y={785 + i * 65.6}>{l}</T>)}
      {months.map(([m, top], i) => (
        <g key={m}><rect x={barX(i)} y={top} width="78" height={1015 - top} fill={C.teal} /><T x={barX(i) + 39} y={1030} a="middle">{m}</T></g>
      ))}
      <polyline points={months.map((m, i) => `${barX(i) + 39},${m[2]}`).join(' ')} fill="none" stroke="#c8323d" strokeWidth="3" />
    </Plot>
  );
}

function PieChart() {
  return (
    <Plot viewBox="224 1122 951 200" role="img" aria-label="TotalSales by BusinessUnitID">
      <circle cx="701" cy="1227" r="78" fill={C.teal} />
      <path d="M701 1227V1149A78 78 0 0 0 626 1247Z" fill={C.red} />
      <path d="M616 1174h14l7 4M766 1276l6 4h16" stroke="#cfccd1" strokeWidth="2" fill="none" />
      <T x={602} y={1173}>1</T><T x={793} y={1280}>3</T>
    </Plot>
  );
}

const bubbles = [[1283, 409, 7], [1377, 479, 11], [1326, 594, 10], [1462, 542, 17], [1527, 517, 12], [1568, 508, 21], [1577, 511, 8], [1523, 545, 22], [1651, 521, 9], [1564, 567, 10], [1635, 593, 4], [1711, 561, 10], [1752, 567, 25], [1897, 527, 5]];
const bubbleLabels = [['DE Lindseys', 1292, 409, 'start'], ['MD Fashions Direct', 1440, 501, 'end'], ['MI Lindseys', 1367, 574, 'end'], ['VA Lindseys', 1487, 495, 'start'], ['KY Fashions Direct', 1446, 511, 'start'], ['WV Fashions Direct', 1506, 539, 'start'], ['NC Lindseys', 1363, 541, 'start'], ['PA Fashions Direct', 1463, 575, 'start'], ['GA Lindseys', 1588, 590, 'start'], ['PA Lindseys', 1595, 608, 'start'], ['SC Lindseys', 1671, 579, 'start'], ['OH Fashions Direct', 1690, 602, 'start'], ['TN Lindseys', 1611, 503, 'start'], ['KY Lindseys', 1890, 526, 'end']];

function ScatterChart() {
  return (
    <Plot viewBox="1193 367 742 302" role="img" aria-label="Sales Per Sq Ft by Total Sales Var %">
      <path d="M1266 386H1920M1266 503H1920M1266 621H1920M1266 386V621M1539 386V621M1812 386V621" stroke="#f3eff4" strokeWidth="2" />
      {bubbleLabels.map(([l, x, y, a]) => <T key={l} x={x} y={y} a={a} s={14}>{l}</T>)}
      <path d="M1572 575l18 17" stroke="#bbb" />
      {bubbles.map(([x, y, r]) => <circle key={`${x}${y}`} cx={x} cy={y} r={r} fill="#44a2be" fillOpacity=".85" stroke="#3a8ea9" strokeWidth="1.500" />)}
      <T x={1229} y={386}>$20</T><T x={1541} y={634} a="middle">5%</T><T x={1812} y={634} a="middle">0%</T>
      <T x={1593} y={659} a="middle">Total Sales Var %</T>
    </Plot>
  );
}

const tree = [
  { c: '#d0252d', b: [1201, 737, 358, 235], l: 'M1492 737V972M1201 864H1492M1492 800H1559M1528 800V901M1492 901H1559M1536 901V941M1492 941H1559M1518 941V972M1518 961H1547M1547 941V972M1547 955H1559M1547 968H1559', t: [['020-Mens', 1207, 754, 1], ['Mendez, Jerry', 1207, 853], ['Rodriguez, Calista', 1207, 961], ['Monro...', 1499, 789], ['Gar...', 1499, 929]] },
  { c: '#4b4a76', b: [1201, 973, 358, 191], l: 'M1468 973V1164M1201 1080H1468M1468 1138H1559M1525 1138V1164M1546 1138V1164M1546 1151H1559M1551 1138V1151', t: [['050-Shoes', 1207, 989, 1], ['Wood, Jana', 1207, 1068], ['Watson, Skyler', 1207, 1153], ['Kelley, Cou...', 1475, 1126]] },
  { c: '#40619c', b: [1201, 1165, 358, 160], l: 'M1342 1165V1325M1495 1165V1325M1342 1277H1495M1495 1233H1559M1495 1291H1559M1527 1291V1325M1543 1291V1325M1527 1309H1559M1551 1291V1309M1543 1300H1559', t: [['040-Juniors', 1207, 1180, 1], ['Buchanan, Alma', 1349, 1265], ['Ward, Kermit', 1207, 1311], ['Pierce, Amery', 1349, 1311], ['Hubba...', 1502, 1223], ['Carr, S...', 1502, 1281]] },
  { c: '#e8c623', b: [1559, 737, 196, 291], l: 'M1676 737V946M1559 946H1755M1725 946V1028M1725 1018H1755M1740 1018V1028', t: [['090-Home', 1565, 754, 1], ['Nelson, Leandra', 1565, 935], ['Robertso...', 1683, 935], ['Perkins, Thor', 1565, 1015]] },
  { c: '#e46424', b: [1755, 737, 176, 291], l: 'M1861 737V1028M1755 892H1931M1755 975H1861M1898 892V992M1861 992H1931M1893 992V1028M1915 992V1028M1893 1017H1931M1915 1009H1931M1923 992V1009', t: [['030-Kids', 1760, 754, 1], ['Gentry, Elizab...', 1760, 881], ['Espinoz...', 1867, 881], ['Gardner, Pasc...', 1760, 963], ['Mendez, Emer...', 1760, 1015]] },
  { c: '#44a2be', b: [1559, 1028, 228, 185], l: 'M1706 1028V1213M1755 1028V1104M1706 1104H1787M1739 1104V1156M1764 1104V1156M1706 1156H1787M1745 1156V1213M1769 1156V1189M1706 1186H1745M1745 1189H1787M1774 1189V1213M1745 1202H1787M1781 1189V1213M1559 1175H1706', t: [['010-Womens', 1565, 1045, 1], ['Carr...', 1714, 1092], ['Buchanan, Alma', 1565, 1164], ['Petty, Perry', 1565, 1201]] },
  { c: '#d37023', b: [1559, 1214, 228, 110], l: 'M1666 1214V1325M1769 1214V1325M1769 1289H1787M1778 1289V1325M1769 1309H1787', t: [['080-Accessories', 1565, 1230, 1], ['Mckenzie, Ap...', 1565, 1311], ['Whitley, Blair', 1672, 1311]] },
  { c: '#793a48', b: [1787, 1028, 144, 118], l: 'M1871 1028V1146M1903 1028V1110M1871 1110H1931M1906 1110V1146M1871 1130H1906M1906 1134H1931M1918 1134V1146M1924 1134V1146', t: [['060-Intimate', 1793, 1045, 1], ['Mccray, N...', 1793, 1134]] },
  { c: '#44369e', b: [1787, 1147, 87, 178], l: 'M1787 1275H1874M1845 1275V1325M1845 1304H1874', t: [['100-Gro...', 1794, 1163, 1], ['Perkins, Th...', 1794, 1263], ['Rober...', 1794, 1311]] },
  { c: '#375bc1', b: [1874, 1147, 57, 178], l: 'M1874 1310H1931M1901 1310V1325M1917 1310V1325', t: [['070...', 1881, 1163, 1], ['Mcke...', 1881, 1297]] },
];

function TreeMap() {
  return (
    <Plot viewBox="1195 734 740 600" role="img" aria-label="TotalSales by Category and Buyer">
      {tree.map(n => (
        <g key={n.c}>
          <rect x={n.b[0]} y={n.b[1]} width={n.b[2]} height={n.b[3]} fill={n.c} stroke="#fff" strokeOpacity=".35" />
          <path d={n.l} stroke="#fff" strokeOpacity=".4" strokeWidth="1.500" fill="none" />
          {n.t.map(([s, x, y, head]) => <T key={s} x={x} y={y} s={head ? 16 : 13} c="#fff">{s}</T>)}
        </g>
      ))}
    </Plot>
  );
}

/* ---------- visual header actions ---------- */
const NoEntry = () => <Svg w={33} stroke="#7d797f"><circle cx="16" cy="17" r="15" /><path d="M6 6l21 22" /></Svg>;
const FilterInteraction = ({ solid }) => (
  <Svg w={34} h={32} stroke="#7d797f"><path d="M2 1v28h20" /><path d="M7 8h4v17H7zM14 14h4v11h-4zM22 3h4v14h-4z" fill={solid ? '#6f6b71' : 'none'} /><path d="M20 20h12l-4 5v6h-3v-6z" fill={solid ? '#6f6b71' : '#fff'} /></Svg>
);
const HighlightInteraction = () => (
  <Svg w={32} h={32} stroke="#7d797f"><path d="M2 1v28h27" /><path d="M7 8h4v17H7zM15 14h4v11h-4zM23 4h4v21h-4z" /><path d="M9 13v12M17 19v6M25 10v15" strokeWidth="5" /></Svg>
);
const Actions = ({ h, short }) => (
  <VisualActions $h={h}>
    <button aria-label="Filter"><FilterInteraction solid={short} /></button>
    {!short && <button aria-label="Highlight"><HighlightInteraction /></button>}
    <button aria-label="None"><NoEntry /></button>
  </VisualActions>
);
const Round = ({ c = '#7d797f', children }) => <Svg w={34} stroke={c}><circle cx="17" cy="17" r="15" />{children}</Svg>;

const handles = [
  'left:-2px;top:-3px;width:8px;height:18px;', 'left:-2px;top:-3px;width:20px;height:6px;',
  'right:-2px;top:-3px;width:8px;height:18px;', 'right:-2px;top:-3px;width:20px;height:6px;',
  'left:-2px;bottom:-4px;width:8px;height:18px;', 'left:-2px;bottom:-4px;width:20px;height:8px;',
  'right:-2px;bottom:-4px;width:8px;height:18px;', 'right:-2px;bottom:-4px;width:20px;height:8px;',
  'left:calc(50% - 12px);top:-3px;width:24px;height:6px;', 'left:calc(50% - 12px);bottom:-4px;width:24px;height:8px;',
  'right:-2px;top:160px;width:8px;height:24px;',
];

const FieldItem = ({ name }) => (
  <Field>
    <span>{name}</span>
    <button aria-label={`${name} options`}><Svg w={24} h={16} stroke="#66626a"><path d="M1 2l11 11L23 2" /></Svg></button>
    <button aria-label={`Remove ${name}`}><Svg w={18} stroke="#55525a"><path d="M1 1l16 16M17 1L1 17" /></Svg></button>
  </Field>
);

export default function App() {
  return (
    <Shell>
      <Global />
      <TitleBar>
        <TitleLeft>
          <IconButton aria-label="Save"><Svg w={34} stroke="#e6e4e7"><path d="M2 2h29v29H8l-6-5zM8 2v13h17V2M11 31V21h12v10M16 31v-5" /></Svg></IconButton>
          <IconButton aria-label="Undo"><Svg w={30} h={34} stroke="#f2f0f3"><path d="M2 2v12h12M2 13C10 1 20 1 26 8c4 6 1 12-4 16l-10 8" /></Svg></IconButton>
          <IconButton aria-label="Redo"><Svg w={30} h={34} stroke="#77757a"><path d="M28 2v12H16M28 13C20 1 10 1 4 8c-4 6-1 12 4 16l10 8" /></Svg></IconButton>
          <FileName>Retail dataset • Last saved: Today at 3:56 PM<Svg w={18} h={10} stroke="none"><path d="M0 0h18L9 10z" fill="#fff" /></Svg></FileName>
        </TitleLeft>
        <SearchBox>
          <Svg w={34} stroke="#3f3e40"><circle cx="21" cy="12" r="10" /><path d="M14 19L2 32" /></Svg>
          <SearchInput type="text" aria-label="Search" placeholder="Search" />
        </SearchBox>
        <TitleRight>
          <User>Ravi Kiran<Svg w={42}><circle cx="21" cy="21" r="20" fill="#fff" stroke="none" /><circle cx="21" cy="12" r="6" stroke="#2b2a2c" strokeWidth="3" /><path d="M10 22h22c1 14-23 14-22 0z" stroke="#2b2a2c" strokeWidth="3" /></Svg></User>
          <WindowButtons>
            <IconButton aria-label="Minimize"><Svg w={22} stroke="#fff"><path d="M1 11h20" /></Svg></IconButton>
            <IconButton aria-label="Restore"><Svg w={22} stroke="#fff"><rect x="1" y="5" width="15" height="15" rx="3" /><path d="M6 2h10q4 0 4 4v10" /></Svg></IconButton>
            <IconButton aria-label="Close"><Svg w={24} stroke="#fff"><path d="M2 2l20 20M22 2L2 22" /></Svg></IconButton>
          </WindowButtons>
        </TitleRight>
      </TitleBar>

      <Tabs>
        {tabs.map(([name, w, kind, gap]) => <Tab key={name} $w={w} $active={kind === 'active'} $context={kind === 'context'} $gap={gap}><span>{name}</span></Tab>)}
        <ShareButton>
          <Svg w={34} h={30} stroke="#fff"><path d="M8 8H2v20h24v-8" /><path d="M8 22c0-9 5-13 13-13V2l11 10-11 10v-7c-6 0-10 1-13 7z" /></Svg>Share<Chevron w={20} color="#fff" />
        </ShareButton>
        <Watermark>@ravikirans</Watermark>
      </Tabs>

      <Ribbon>
        <Group $w={326}>
          <ClipRow>
            <Command $w={70} disabled>{BIG.paste}Paste</Command>
            <ClipList>
              <ClipButton><Svg w={34}><path d="M10 1l11 24M24 1L13 25" /><rect x="8" y="25" width="6" height="7" stroke="#2f86cc" /><rect x="20" y="25" width="6" height="7" stroke="#2f86cc" /></Svg>Cut</ClipButton>
              <ClipButton><Svg w={34}><path d="M11 28H2V2h14v4" /><path d="M14 8h12l6 8v16H14zM25 8v9h7M19 22h8M19 26h8" fill="#fff" /></Svg>Copy</ClipButton>
              <ClipButton><Svg w={34}><path d="M2 15l14-5 9 11-11 11z" fill="#fde3c2" stroke="#d9792a" /><path d="M6 21l16 1-8 10z" fill="#d9792a" stroke="none" /><path d="M14 9l4-3 4 4 7-8 4 3-8 9 3 4-3 4z" fill="#fff" /></Svg>Format painter</ClipButton>
            </ClipList>
          </ClipRow>
          <GroupLabel>Clipboard</GroupLabel>
        </Group>
        {commandGroups.map(g => (
          <Group key={g.name} $w={g.w}>
            <GroupBody>
              {g.items.map(([icon, w, a, b, menu, off]) => (
                <Command key={icon} $w={w} disabled={off}>
                  {BIG[icon]}<span>{a}</span>
                  {(b || menu) && <span>{b}{menu && <Chevron color={off ? '#c3bfc5' : C.dark} />}</span>}
                </Command>
              ))}
            </GroupBody>
            <GroupLabel>{g.name}</GroupLabel>
          </Group>
        ))}
        <Collapse aria-label="Collapse ribbon"><Svg w={20} h={14} stroke={C.dark}><path d="M2 12l8-9 8 9" strokeWidth="3" /></Svg></Collapse>
      </Ribbon>

      <Workspace>
        <Rail>
          <RailButton $active aria-label="Report view"><Svg w={30} h={32} stroke={C.dark} strokeWidth="2"><path d="M2 1v28h27" strokeWidth="3" /><path d="M7 7h5v18H7zM15 13h4v12h-4zM23 3h4v22h-4z" /></Svg></RailButton>
          <RailButton aria-label="Table view"><Svg w={34} stroke="#77737a"><rect x="1" y="2" width="32" height="30" /><path d="M1 5h32" strokeWidth="4" /><path d="M1 13h32M1 22h32M12 8v24M22 8v24" /></Svg></RailButton>
          <RailButton aria-label="Model view"><Svg w={38} stroke="#77737a"><rect x="1" y="12" width="15" height="15" /><rect x="22" y="1" width="15" height="15" /><rect x="22" y="21" width="15" height="15" /><path d="M1 17h15M22 6h15M22 26h15M9 12V5h13M9 27v4h13" /></Svg></RailButton>
          <RailButton aria-label="DAX query view"><Svg w={38} stroke="#77737a"><path d="M10 20V2h14l8 9v18M23 2v10h9M35 14c2 10 0 16-3 20" /><text x="14" y="34" textAnchor="middle" fontSize="13" fill="#66626a" stroke="none">DAX</text></Svg></RailButton>
        </Rail>

        <Canvas>
          <Page>
            <Column>
              <Actions h={39} short />
              <Card $h={309}>
                <TableFrame>
                  <Matrix>
                    <thead><tr><th scope="col">Category</th>{columns.map(c => <th key={c} scope="col">{c}</th>)}</tr></thead>
                    <tbody>{rows.map(([name, ...v]) => <tr key={name}><th scope="row">{name}</th>{columns.map((c, i) => <td key={c}>{v[i]}</td>)}</tr>)}</tbody>
                    <tfoot><tr><th scope="row">Total</th>{columns.map((c, i) => <td key={c}>{totals[i]}</td>)}</tr></tfoot>
                  </Matrix>
                </TableFrame>
                <HScroll /><VScroll />
              </Card>
              <Actions h={34} />
              <Card $h={346}>
                <CardTitle>This Year Sales and Total Sales Var % by FiscalMonth</CardTitle>
                <Legend><li><Dot $c={C.teal} />This Year Sales</li><li><Dot $c={C.red} />Total Sales Var %</li></Legend>
                <ComboChart />
              </Card>
              <Actions h={46} />
              <Card $h={330}>
                <CardTitle>TotalSales by BusinessUnitID</CardTitle>
                <PieChart />
              </Card>
            </Column>

            <Column>
              <SelectedVisual>
                <VisualHeader>
                  <HeaderSide $gap={9}>
                    <button aria-label="Drill up"><Round c="#6d696f"><path d="M17 26V8M10 15l7-7 7 7" /></Round></button>
                    <button aria-label="Next level"><Round c="#c3bfc5"><path d="M12 9v16M9 22l3 3 3-3M22 9v16M19 22l3 3 3-3" /></Round></button>
                    <button aria-label="Expand down"><Round c="#c3bfc5"><path d="M17 8v6M11 25V15h12v10M8 22l3 3 3-3M20 22l3 3 3-3" /></Round></button>
                  </HeaderSide>
                  <Svg w={34} h={12} stroke="#7d797f"><path d="M1 2h32M1 9h32" /></Svg>
                  <HeaderSide $gap={14} $end>
                    <button aria-label="Drill mode"><Round><path d="M17 8v18M10 19l7 7 7-7" /></Round></button>
                    <button aria-label="Filters on this visual"><Svg w={36} h={32} stroke="#7d797f"><path d="M2 2h31L21 15v14h-7V15z" /></Svg></button>
                    <button aria-label="Focus mode"><Svg w={32} h={32} stroke="#7d797f"><path d="M2 13V3h12M2 17v10h26v-8M2 17h12v10M18 3h10v10M28 3L17 14" /></Svg></button>
                    <button aria-label="More options"><Svg w={34} h={32} stroke="none" fill="#6d696f"><circle cx="5" cy="15" r="2.500" /><circle cx="17" cy="15" r="2.500" /><circle cx="29" cy="15" r="2.500" /></Svg></button>
                  </HeaderSide>
                </VisualHeader>
                <ScatterChart />
                {handles.map(s => <Handle key={s} $s={s} />)}
              </SelectedVisual>
              <Actions h={34} />
              <Card $h={640}>
                <CardTitle>TotalSales by Category and Buyer</CardTitle>
                <TreeFrame><TreeMap /></TreeFrame>
              </Card>
            </Column>

            <Tooltip role="tooltip">
              <TipList>
                <dt>Territory Chain</dt><dd>MD Fashions Direct</dd>
                <dt>Total Sales Var %</dt><dd>-7.95%</dd>
                <dt>Sales Per Sq Ft</dt><dd>$15.97</dd>
                <dt>This Year Sales</dt><dd>$958,098</dd>
              </TipList>
              <TipMark />
            </Tooltip>
            <Pointer width="44" height="64" viewBox="0 0 44 64"><path d="M3 3v48l11-11 10 19 7-4-10-18h18z" fill="#fff" stroke="#111" strokeWidth="3" /></Pointer>
          </Page>
        </Canvas>

        <FiltersPane>
          <ChevronButton aria-label="Expand filters"><DoubleChevron /></ChevronButton>
          <VerticalLabel><Svg w={26}><path d="M24 2v22l-9-8H2v-6h13z" /></Svg>Filters</VerticalLabel>
        </FiltersPane>

        <VizPane>
          <PaneHead><PaneTitle>Visualizations</PaneTitle><ChevronButton aria-label="Collapse visualizations"><DoubleChevron right /></ChevronButton></PaneHead>
          <SubTitle>Build visual</SubTitle>
          <Modes>
            <Mode $active aria-label="Build visual"><Svg w={50}><path d="M1 3h39" strokeWidth="4" /><g fill="#217661" stroke={C.dark} strokeWidth="3" strokeDasharray="3 4"><rect x="2" y="13" width="46" height="14" /><rect x="2" y="35" width="46" height="14" /></g></Svg></Mode>
            <Mode aria-label="Format visual"><Svg w={48} strokeWidth="2.500"><path d="M2 38V18h12M14 30V2h13v22M27 12h13" /><path d="M44 16c-2 9-12 20-17 23l-4-4c4-6 13-16 21-19zM23 35c-6 1-5 8-14 9 8 5 19 2 18-5" fill="#f5f1f4" /></Svg></Mode>
            <Mode aria-label="Analytics"><Svg w={50} strokeWidth="2.500"><circle cx="22" cy="22" r="20" /><path d="M4 21l10-3 6 6 18-12M12 26v10M19 30v10M26 28v12M33 22v14" /><path d="M35 36l13 13" strokeWidth="4" /></Svg></Mode>
          </Modes>
          <Plot viewBox="0 0 364 26"><path d="M0 24H32L49 9l16 15H364" stroke="#a19da3" strokeWidth="3" fill="none" /></Plot>
          <Gallery>
            {gallery.map(([name, art, sel]) => <VizButton key={name} aria-label={name} $selected={sel}><Svg w={38} overflow="visible">{art}</Svg></VizButton>)}
          </Gallery>
          <More aria-label="More visuals"><Svg w={34} h={36} stroke="none" fill="#3b5568"><circle cx="4" cy="18" r="2.500" /><circle cx="16" cy="18" r="2.500" /><circle cx="28" cy="18" r="2.500" /></Svg></More>
          <Wells>
            <WellScroll />
            <WellName>Values</WellName>
            <Well><FieldItem name="Territory" /><FieldItem name="Chain" /><WellMark /></Well>
            <WellName>X Axis</WellName>
            <Well><FieldItem name="Total Sales Var %" /></Well>
          </Wells>
        </VizPane>

        <DataPane>
          <ChevronButton aria-label="Expand data"><DoubleChevron /></ChevronButton>
          <VerticalLabel>Data</VerticalLabel>
        </DataPane>
      </Workspace>

      <Arrow width="2560" height="1319" viewBox="0 0 2560 1319">
        <path d="M1332 539L2152 1067" stroke="#f35be3" strokeWidth="5" /><path d="M1321 532l19 1-10 15z" fill="#f35be3" />
      </Arrow>
    </Shell>
  );
}
